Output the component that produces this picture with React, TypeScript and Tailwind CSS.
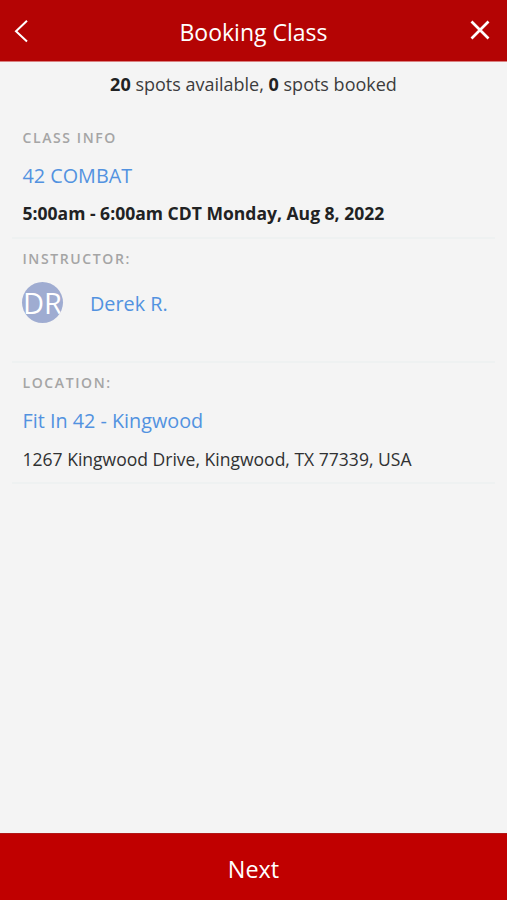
import type { ReactNode } from "react";

interface ISection {
    label: string,
    title?: string,
    height: string,
    children: ReactNode,
}

function Section({ label, title, height, children }: ISection) {
  return (
    <section className={`mx-3 px-[10.5px] border-b-2 border-[#eef1f1] ${height}`}>
        <h2 className="pt-[10px] text-[14px] leading-5 font-semibold tracking-[1.6px] text-[#a5a5a5]">{label}</h2>
        {title && <p className="mt-[14px] text-[19.8px] leading-7 text-[#5292e0]">{title}</p>}
        {children}
    </section>
  )
}

export default function App() {
  return (
    <div className="flex flex-col w-full h-[900px] bg-[#f4f4f4] font-['Open_Sans',sans-serif] text-[#212223]">
        <header className="flex items-center justify-between h-[62px] pl-3 pr-[17px] bg-[#b40404] border-b border-[#d98080] text-white">
            <button aria-label="Back" className="pt-px">
                <svg width="20" height="26" viewBox="0 0 20 26" fill="none" stroke="currentColor" strokeWidth="2">
                    <path d="M15 2.8 L4 13.2 L15 23.6" />
                </svg>
            </button>
            <h1 className="pt-[2px] pl-[5px] text-[23px] leading-8">Booking Class</h1>
            <button aria-label="Close" className="pb-px">
                <svg width="20" height="20" viewBox="0 0 20 20" fill="none" stroke="currentColor" strokeWidth="2.7">
                    <path d="M1.5 1.5 L18.5 18.5 M18.5 1.5 L1.5 18.5" />
                </svg>
            </button>
        </header>

        <main className="flex-1">
            <p className="pt-[8px] h-[56px] text-center text-[18px] leading-7 text-[#3c3c3d]">
                <b className="text-[#212223]">20</b> spots available, <b className="text-[#212223]">0</b> spots booked
            </p>

            <Section label="CLASS INFO" title="42 COMBAT" height="h-[121px]">
                <p className="mt-[11px] text-[17.55px] leading-6 font-bold whitespace-nowrap">5:00am - 6:00am CDT Monday, Aug 8, 2022</p>
            </Section>

            <Section label="INSTRUCTOR:" height="h-[124px]">
                <div className="flex items-center mt-[13px] -ml-[0.5px]">
                    <div className="flex items-center justify-center w-[41px] h-[41px] rounded-full bg-[#9facd1] text-white text-[29px] overflow-hidden">DR</div>
                    <p className="ml-[27px] pt-[2px] text-[19.8px] leading-7 text-[#5292e0]">Derek R.</p>
                </div>
            </Section>

            <Section label="LOCATION:" title="Fit In 42 - Kingwood" height="h-[121px]">
                <p className="mt-[12px] text-[17.55px] leading-6 whitespace-nowrap text-[#303132]">1267 Kingwood Drive, Kingwood, TX 77339, USA</p>
            </Section>
        </main>

        <button className="h-[67px] pt-[5px] bg-[#c00000] border-t border-[#b01818] text-white text-[23.4px]">Next</button>
    </div>
  )
}
